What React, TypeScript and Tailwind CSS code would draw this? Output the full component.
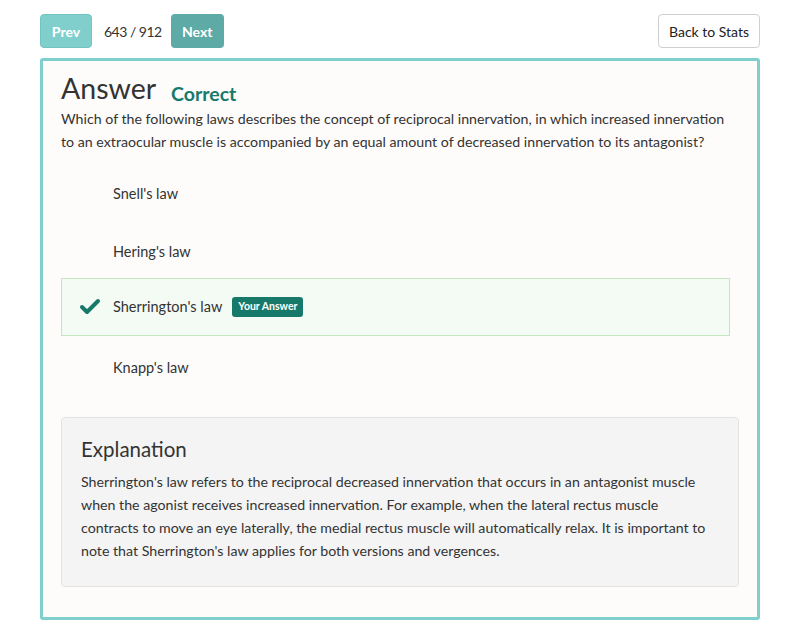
import { Check } from "lucide-react";

const options = [
  { label: "Snell's law" },
  { label: "Hering's law" },
  { label: "Sherrington's law", correct: true, yours: true },
  { label: "Knapp's law" },
];

export default function App() {
  return (
    <div className="min-h-[643px] bg-white font-['Lato',sans-serif] text-[#333]">
      <div className="mx-10 pt-[14px]">
        <div className="flex items-center justify-between">
          <div className="flex items-center">
            <button className="h-[34px] w-[52px] rounded bg-[#80cfcd] border border-[#72c3c1] text-[14px] font-bold text-white">
              Prev
            </button>
            <span className="ml-[12px] text-[14px] tracking-[-0.5px] text-[#333]">643 / 912</span>
            <button className="ml-[9px] h-[34px] w-[53px] rounded bg-[#5eaaa6] text-[14px] font-bold text-white">
              Next
            </button>
          </div>
          <button className="h-[34px] w-[102px] rounded border border-[#cfcfcf] bg-white text-[14px] text-[#222]">
            Back to Stats
          </button>
        </div>

        <div className="mt-[10px] rounded-[3px] border-[3px] border-[#7fcfcf] bg-[#fdfcfa] px-[18px] pb-[30px] pt-[9px]">
          <div className="flex items-end">
            <h1 className="text-[28.5px] leading-[36px] text-[#333]">Answer</h1>
            <span className="ml-[15px] mb-[-2px] text-[19.5px] font-bold text-[#17796a]">Correct</span>
          </div>
          <p className="mt-[1px] text-[14.2px] leading-[23px] text-[#333]">
            Which of the following laws describes the concept of reciprocal innervation, in which increased innervation
            to an extraocular muscle is accompanied by an equal amount of decreased innervation to its antagonist?
          </p>

          <div className="mt-[12px] mr-[9px]">
            {options.map((o) =>
              o.correct ? (
                <div
                  key={o.label}
                  className="-mt-[3px] mb-[3px] flex h-[58px] items-center border border-[#c6e6c0] bg-[#f4faf4]"
                >
                  <div className="flex w-[51px] justify-center pl-[5px]">
                    <Check className="h-[24px] w-[24px] text-[#17796a]" strokeWidth={4} />
                  </div>
                  <span className="text-[14.5px] text-[#333]">{o.label}</span>
                  {o.yours && (
                    <span className="ml-[10px] rounded-[3px] bg-[#17796a] px-[6px] py-[2px] text-[10.5px] font-bold text-white">
                      Your Answer
                    </span>
                  )}
                </div>
              ) : (
                <div key={o.label} className="flex h-[58px] items-center pl-[52px]">
                  <span className="text-[14.5px] text-[#333]">{o.label}</span>
                </div>
              )
            )}
          </div>

          <div className="mt-[20px] rounded border border-[#e3e3e3] bg-[#f4f4f4] px-[19px] pb-[24px] pt-[16px]">
            <h2 className="text-[20.5px] leading-[30px] text-[#333]">Explanation</h2>
            <p className="mt-[6px] text-[14.2px] leading-[23px] text-[#333]">
              Sherrington's law refers to the reciprocal decreased innervation that occurs in an antagonist muscle
              when the agonist receives increased innervation. For example, when the lateral rectus muscle
              contracts to move an eye laterally, the medial rectus muscle will automatically relax. It is important to
              note that Sherrington's law applies for both versions and vergences.
            </p>
          </div>
        </div>
      </div>
    </div>
  );
}
